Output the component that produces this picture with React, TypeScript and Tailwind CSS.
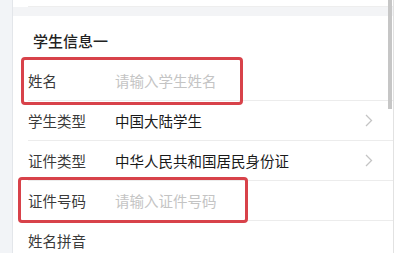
import React from 'react';

const font = { fontFamily: '"Noto Sans CJK SC", "Noto Sans", sans-serif' };

interface Row {
  label: string;
  value?: string;
  placeholder?: string;
  arrow?: boolean;
}

const rows: Row[] = [
  { label: '姓名', placeholder: '请输入学生姓名' },
  { label: '学生类型', value: '中国大陆学生', arrow: true },
  { label: '证件类型', value: '中华人民共和国居民身份证', arrow: true },
  { label: '证件号码', placeholder: '请输入证件号码' },
  { label: '姓名拼音' },
];

const Chevron = () => (
  <svg width="8" height="13" viewBox="0 0 8 13" fill="none">
    <path d="M1 1l5.5 5.5L1 12" stroke="#c4c4c4" strokeWidth="1.3" />
  </svg>
);

export default function App() {
  return (
    <div className="flex h-[253px] w-[406px] overflow-hidden bg-white" style={font}>
      {/* left gutter */}
      <div className="w-[13px] shrink-0 border-r border-[#e3e6ea] bg-[#f2f4f7]" />

      <div className="relative flex w-[380px] shrink-0 flex-col">
        {/* tail of previous card */}
        <div className="h-[7px] shrink-0 border-b border-[#eeeeee] ml-[15px]" />
        <div className="h-[9px] shrink-0 bg-[#f3f4f6]" />

        <div className="flex flex-col">
          <div className="flex h-[45px] items-center pl-[20px] pt-[6px] text-[15px] font-medium text-[#222]">
            学生信息一
          </div>
          {rows.map((r, i) => (
            <div key={i} className="ml-[15px] flex h-[40px] items-center border-b border-[#ececec] text-[14.5px]">
              <span className="w-[87px] shrink-0 text-[#3a3a3a]">{r.label}</span>
              {r.value && <span className="flex-1 text-[#1a1a1a]">{r.value}</span>}
              {r.placeholder && <span className="flex-1 text-[#c4c4c4]">{r.placeholder}</span>}
              {!r.value && !r.placeholder && <span className="flex-1" />}
              {r.arrow && (
                <span className="mr-[20px] flex items-center">
                  <Chevron />
                </span>
              )}
            </div>
          ))}
        </div>

        {/* scrollbar thumb */}
        <div className="absolute right-[1px] top-0 h-[109px] w-[4px] bg-[#c6c6c6]" />

        {/* highlight boxes */}
        <div className="absolute left-[8px] top-[57px] h-[48px] w-[222px] rounded-[4px] border-[3px] border-[#d8424a]" />
        <div className="absolute left-[5px] top-[177px] h-[46px] w-[230px] rounded-[4px] border-[3px] border-[#d8424a]" />
      </div>

      {/* right gutter */}
      <div className="flex-1 border-l border-[#e2e2e2] bg-white" />
    </div>
  );
}
